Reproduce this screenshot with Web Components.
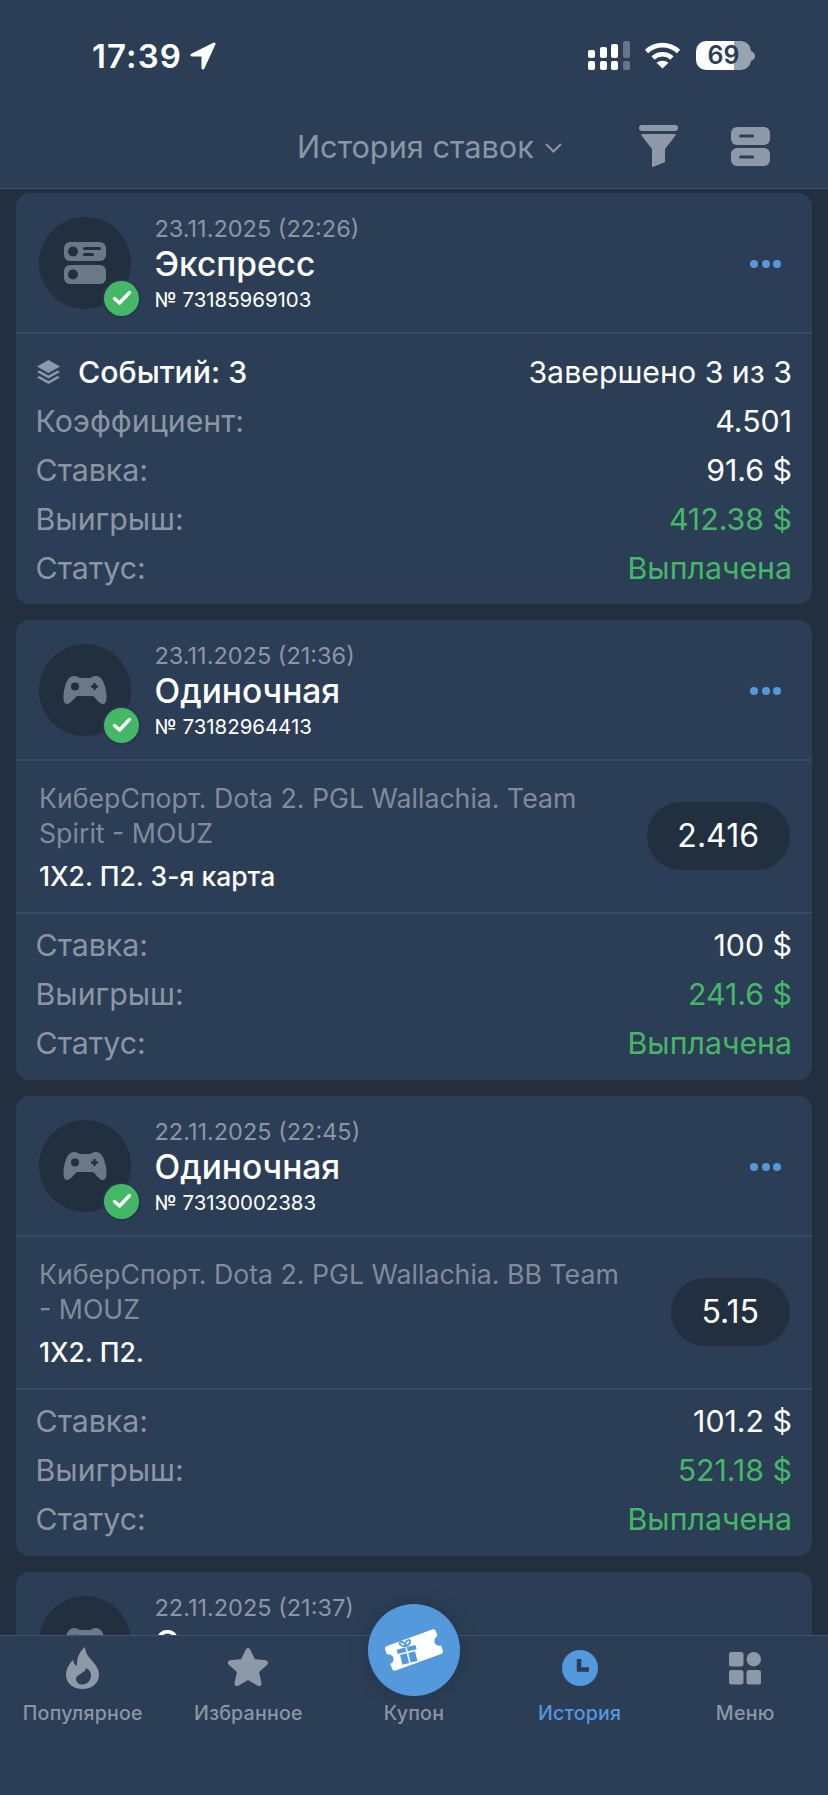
<!DOCTYPE html>
<html lang="ru">
<head>
<meta charset="utf-8">
<title>История ставок</title>
<style>
  html, body { margin: 0; height: 100%; }
  body {
    display: flex; flex-direction: column;
    width: 828px; height: 1795px; overflow: hidden;
    background: #232f3f; color: #fff;
    font-family: Inter, "Noto Sans", sans-serif;
  }
</style>
</head>
<body>
<status-bar></status-bar>
<history-header>История ставок</history-header>
<bet-list>
  <bet-card date="23.11.2025 (22:26)" title="Экспресс" number="№ 73185969103" icon="express">
    <bet-rows>
      <bet-row events value="Завершено 3 из 3" tone="white">Событий: 3</bet-row>
      <bet-row value="4.501">Коэффициент:</bet-row>
      <bet-row value="91.6 $">Ставка:</bet-row>
      <bet-row value="412.38 $" tone="green">Выигрыш:</bet-row>
      <bet-row value="Выплачена" tone="green">Статус:</bet-row>
    </bet-rows>
  </bet-card>
  <bet-card date="23.11.2025 (21:36)" title="Одиночная" number="№ 73182964413" icon="game">
    <bet-selection odds="2.416" pick="1X2. П2. 3-я карта">КиберСпорт. Dota 2. PGL Wallachia. Team Spirit - MOUZ</bet-selection>
    <bet-rows short>
      <bet-row value="100 $">Ставка:</bet-row>
      <bet-row value="241.6 $" tone="green">Выигрыш:</bet-row>
      <bet-row value="Выплачена" tone="green">Статус:</bet-row>
    </bet-rows>
  </bet-card>
  <bet-card date="22.11.2025 (22:45)" title="Одиночная" number="№ 73130002383" icon="game">
    <bet-selection odds="5.15" pick="1X2. П2.">КиберСпорт. Dota 2. PGL Wallachia. BB Team - MOUZ</bet-selection>
    <bet-rows short>
      <bet-row value="101.2 $">Ставка:</bet-row>
      <bet-row value="521.18 $" tone="green">Выигрыш:</bet-row>
      <bet-row value="Выплачена" tone="green">Статус:</bet-row>
    </bet-rows>
  </bet-card>
  <bet-card date="22.11.2025 (21:37)" title="Одиночная" icon="game"></bet-card>
</bet-list>
<tab-bar>
  <tab-item icon="fire">Популярное</tab-item>
  <tab-item icon="star">Избранное</tab-item>
  <tab-item icon="coupon">Купон</tab-item>
  <tab-item icon="clock" active>История</tab-item>
  <tab-item icon="menu">Меню</tab-item>
</tab-bar>

<script>
// Small helper: every element sets its shadow markup the same way.
function shadow(el, html) {
    el.attachShadow({mode: "open"}).innerHTML = html;
}

class StatusBar extends HTMLElement {
    constructor() {
        super();
        shadow(this, `
<style>
:host { display: flex; align-items: flex-start; justify-content: space-between; flex: none;
        height: 100px; padding: 41px 73px 0 92px; box-sizing: border-box; background: #2b3e55; }
.time { display: flex; align-items: center; gap: 8px; height: 30px;
        font: 600 33px/32px Inter, sans-serif; letter-spacing: 1.100px; color: #fff; }
.right { display: flex; align-items: flex-start; gap: 14px; }
.batt { display: flex; align-items: center; margin-left: 1px; }
.level { width: 55px; height: 29px; border-radius: 10px; text-align: center;
         background: linear-gradient(90deg, #fff 38px, #98a3b1 38px);
         font: 600 25px/29px Inter, sans-serif; color: #2b3e55; }
svg { display: block; }
</style>
<div class="time">17:39
  <svg width="26" height="28" viewBox="0 0 26 28"><path d="M24 2 L2 13 H13 V26 Z" fill="#fff" stroke="#fff" stroke-width="3" stroke-linejoin="round"/></svg>
</div>
<div class="right">
  <svg width="42" height="29" viewBox="0 0 42 29">
    <g fill="#fff"><rect x="0" y="9" width="7" height="8" rx="2"/><rect x="12" y="6" width="7" height="11" rx="2"/><rect x="23" y="3" width="7" height="14" rx="2"/>
    <rect x="0" y="20" width="7" height="9" rx="2"/><rect x="12" y="20" width="7" height="9" rx="2"/><rect x="23" y="20" width="7" height="9" rx="2"/></g>
    <g fill="#66768a"><rect x="35" y="0" width="7" height="17" rx="2"/><rect x="35" y="20" width="7" height="9" rx="2"/></g>
  </svg>
  <svg width="37" height="28" viewBox="0 0 37 28" fill="none" stroke="#fff" stroke-width="4.6">
    <path d="M2.5 10.5 C11.5 2 25.5 2 34.5 10.5"/><path d="M9 17 C14.5 12 22.5 12 28 17"/>
    <path d="M18.5 27.5 L12.5 21.8 C16 19 21 19 24.5 21.8 Z" fill="#fff" stroke="none"/>
  </svg>
  <div class="batt"><div class="level">69</div>
    <svg width="4" height="10" viewBox="0 0 4 10"><path d="M0 0 C3 1 4 3 4 5 C4 7 3 9 0 10 Z" fill="#98a3b1"/></svg>
  </div>
</div>`);
    }
}
customElements.define("status-bar", StatusBar);

class HistoryHeader extends HTMLElement {
    constructor() {
        super();
        shadow(this, `
<style>
:host { display: flex; align-items: center; height: 89px; padding: 4px 58px 0 297px; box-sizing: border-box;
        background: #2b3e55; border-bottom: 1px solid #3a4f68; color: #8b96a5; flex: none; }
.title { font: 400 30.700px/36px Inter, sans-serif; margin-top: 2px; white-space: nowrap; }
.chev { margin-left: 10px; margin-top: 3px; }
.funnel { margin-left: auto; }
.stack { margin-left: 53px; }
svg { display: block; flex: none; }
</style>
<span class="title"><slot></slot></span>
<svg class="chev" width="19" height="12" viewBox="0 0 19 12"><path d="M2 2 L9.5 9.5 L17 2" fill="none" stroke="#8b96a5" stroke-width="2" /></svg>
<svg class="funnel" width="39" height="42" viewBox="0 0 39 42" fill="#8e99a8">
  <rect width="39" height="6" rx="3"/>
  <path d="M3 9 H36 Q37.500 9 36.500 10.500 L26 24 V36 Q26 37 25 37.500 L14 42 Q13 42 13 41 V24 L2.500 10.500 Q1.500 9 3 9Z"/>
</svg>
<svg class="stack" width="39" height="39" viewBox="0 0 39 39" fill="#8e99a8">
  <rect width="39" height="18" rx="6"/><rect y="21" width="39" height="18" rx="6"/>
  <rect x="8" y="7.500" width="15" height="3" rx="1.500" fill="#2b3e55"/><rect x="8" y="28.500" width="15" height="3" rx="1.500" fill="#2b3e55"/>
</svg>`);
    }
}
customElements.define("history-header", HistoryHeader);

class BetList extends HTMLElement {
    constructor() {
        super();
        shadow(this, `
<style>
:host { display: flex; flex-direction: column; gap: 16px; flex: 1; min-height: 0; overflow: hidden;
        padding: 4px 16px 0; box-sizing: border-box; }
</style>
<slot></slot>`);
    }
}
customElements.define("bet-list", BetList);

const AVATAR_ICONS = {
    express: `<svg width="42" height="42" viewBox="0 0 42 42" fill="#6a7888">
        <rect width="42" height="19" rx="6"/><rect y="23" width="42" height="19" rx="6"/>
        <circle cx="9" cy="9.500" r="5" fill="#222f3f"/><circle cx="9" cy="32.500" r="5" fill="#222f3f"/>
        <rect x="19" y="5" width="18" height="3" rx="1.500" fill="#222f3f"/><rect x="19" y="11" width="11" height="3" rx="1.500" fill="#222f3f"/>
      </svg>`,
    game: `<svg width="44" height="30" viewBox="0 0 44 30" fill="#6a7888">
        <path d="M11 1 C14 1 16 3 18 3 H26 C28 3 30 1 33 1 C38 1 41 6 43 16 C44 22 44 29 40 29 C36 29 33 23 30 21 H14 C11 23 8 29 4 29 C0 29 0 22 1 16 C3 6 6 1 11 1Z"/>
        <circle cx="12" cy="11.500" r="4" fill="#222f3f"/>
        <path d="M31.500 8 V15 M28 11.500 H35" stroke="#222f3f" stroke-width="2.400"/>
      </svg>`
};

class BetCard extends HTMLElement {
    constructor() {
        super();
        const number = this.getAttribute("number");
        shadow(this, `
<style>
:host { display: block; flex: none; background: #2b3e55; border-radius: 14px; overflow: hidden; color: #fff; }
header { display: flex; height: 141px; box-sizing: border-box; padding: 23.500px 31px 0 23px;
         border-bottom: 2px solid #354a63; }
.avatar { position: relative; width: 92px; height: 92px; flex: none; border-radius: 50%; background: #222f3f;
          display: flex; align-items: center; justify-content: center; }
.badge { position: absolute; right: -8px; bottom: -7px; width: 35px; height: 35px; border-radius: 50%;
         background: #45b868; box-shadow: 0 0 0 2px #263750; display: flex; align-items: center; justify-content: center; }
.text { margin-left: 23.500px; flex: 1; display: flex; flex-direction: column; }
.date { font: 400 23.500px/24px Inter, sans-serif; color: #8b96a5; white-space: nowrap; }
.title { font: 500 33.500px/40px Inter, sans-serif; margin-top: 3.500px; }
.number { font: 400 20.400px/24px Inter, sans-serif; margin-top: 3.500px; }
.dots { display: flex; gap: 3.500px; margin-top: 43px; height: 8px; }
.dots i { width: 8px; height: 8px; border-radius: 50%; background: #5499dc; }
svg { display: block; }
</style>
<header>
  <div class="avatar">${AVATAR_ICONS[this.getAttribute("icon")]}
    <div class="badge"><svg width="20" height="16" viewBox="0 0 20 16"><path d="M2.500 8.500 L7.500 13 L17.500 2.500" fill="none" stroke="#fff" stroke-width="3.400" stroke-linecap="round" stroke-linejoin="round"/></svg></div>
  </div>
  <div class="text">
    <div class="date">${this.getAttribute("date")}</div>
    <div class="title">${this.getAttribute("title")}</div>
    ${number ? `<div class="number">${number}</div>` : ""}
  </div>
  <div class="dots"><i></i><i></i><i></i></div>
</header>
<slot></slot>`);
    }
}
customElements.define("bet-card", BetCard);

class BetRows extends HTMLElement {
    constructor() {
        super();
        shadow(this, `
<style>
:host { display: block; padding: 13px 20px 12px 19.500px; }
:host([short]) { padding-top: 6px; padding-bottom: 13px; }
</style>
<slot></slot>`);
    }
}
customElements.define("bet-rows", BetRows);

class BetRow extends HTMLElement {
    constructor() {
        super();
        const events = this.hasAttribute("events");
        shadow(this, `
<style>
:host { display: flex; align-items: center; height: 49px; font: 400 30.300px/36px Inter, sans-serif; color: #8b96a5; }
:host([events]) { color: #fff; font-weight: 500; }
.ev { margin: 0 18px 0 1.500px; display: block; }
.value { margin-left: auto; color: #fff; white-space: nowrap; }
:host([tone="green"]) .value { color: #45b868; }
:host([events]) .value { font-weight: 400; }
</style>
${events ? `<svg class="ev" width="23" height="24" viewBox="0 0 23 24" fill="#8e99a8">
  <path d="M11.500 0 L23 6.500 L11.500 13 L0 6.500Z"/>
  <path d="M2.500 10.500 L11.500 15.500 L20.500 10.500 L23 12 L11.500 18.500 L0 12Z"/>
  <path d="M2.500 16 L11.500 21 L20.500 16 L23 17.500 L11.500 24 L0 17.500Z"/></svg>` : ""}
<span><slot></slot></span>
<span class="value">${this.getAttribute("value")}</span>`);
    }
}
customElements.define("bet-row", BetRow);

class BetSelection extends HTMLElement {
    constructor() {
        super();
        shadow(this, `
<style>
:host { display: flex; align-items: center; height: 153px; box-sizing: border-box; padding: 0 22.500px 0 23px;
        border-bottom: 2px solid #354a63; }
.info { flex: 1; min-width: 0; }
.event { font: 400 26.700px/35px Inter, sans-serif; color: #808c9b; }
.pick { font: 500 26.500px/32px Inter, sans-serif; color: #fff; margin-top: 9px; }
.odds { flex: none; height: 68px; padding: 0 30.500px; margin: -2px 0 0 40px; border-radius: 34px; background: #222f3f;
        font: 400 32px/68px Inter, sans-serif; color: #fff; }
</style>
<div class="info">
  <div class="event"><slot></slot></div>
  <div class="pick">${this.getAttribute("pick")}</div>
</div>
<div class="odds">${this.getAttribute("odds")}</div>`);
    }
}
customElements.define("bet-selection", BetSelection);

class TabBar extends HTMLElement {
    constructor() {
        super();
        shadow(this, `
<style>
:host { display: grid; grid-template-columns: repeat(5, 1fr); height: 160px; flex: none; box-sizing: border-box;
        background: #2b3e55; border-top: 1px solid #3e5470; position: relative; }
</style>
<slot></slot>`);
    }
}
customElements.define("tab-bar", TabBar);

const TAB_ICONS = {
    fire: `<svg width="33" height="42" viewBox="0 0 33 42"><path fill="#8e99a8" d="M19 0 C19.500 8 24 11 28 16 C31 20 33 23 33 28 C33 36 26 42 16.500 42 C7 42 0 36 0 28 C0 22 3 17 7 13 C7.500 16 9 18 11 19 C10.500 12 13 5 19 0Z"/>
        <path fill="#2b3e55" d="M20 21 C20 26 10 27 10 32 C10 35.500 13 37.500 16.500 37.500 C21.500 37.500 25 33 25 28 C25 25 23 22.500 20 21Z"/></svg>`,
    star: `<svg width="42" height="42" viewBox="0 0 42 42"><path fill="#8e99a8" stroke="#8e99a8" stroke-width="5" stroke-linejoin="round" d="M21 3.500 L26.200 14.500 L38.500 15.800 L29.300 24.200 L32 36.500 L21 30 L10 36.500 L12.700 24.200 L3.500 15.800 L15.800 14.500Z"/></svg>`,
    clock: `<svg width="36" height="36" viewBox="0 0 36 36"><circle cx="18" cy="18" r="18" fill="#5499dc"/><path d="M17 9 V19.500 H27" fill="none" stroke="#2b3e55" stroke-width="4.500"/></svg>`,
    menu: `<svg width="32" height="33" viewBox="0 0 32 33" fill="#8e99a8"><rect width="14.500" height="14.500" rx="2.500"/><circle cx="24.800" cy="7.200" r="7.200"/><rect y="18" width="14.500" height="14.500" rx="2.500"/><rect x="17.500" y="18" width="14.500" height="14.500" rx="2.500"/></svg>`,
    coupon: `<svg width="92" height="92" viewBox="0 0 92 92">
        <g transform="rotate(-20 46 46)">
          <path fill="#fff" d="M22 33 H70 Q73 33 73 36 V41 A5 5 0 0 0 73 51 V56 Q73 59 70 59 H22 Q19 59 19 56 V51 A5 5 0 0 0 19 41 V36 Q19 33 22 33Z"/>
        </g>
        <g transform="rotate(-14 40 50)" fill="#5499dc">
          <rect x="30" y="43" width="9" height="4.500"/><rect x="40.500" y="43" width="9" height="4.500"/>
          <rect x="32" y="49" width="7" height="10"/><rect x="40.500" y="49" width="7" height="10"/>
          <path d="M39.700 42 C34 41 33 36.500 36 36.500 C38 36.500 39.700 39 39.700 42 C39.700 39 41.500 36.500 43.500 36.500 C46.500 36.500 45.500 41 39.700 42Z" fill="none" stroke="#5499dc" stroke-width="1.800"/>
        </g>
      </svg>`
};

class TabItem extends HTMLElement {
    constructor() {
        super();
        const name = this.getAttribute("icon");
        shadow(this, `
<style>
:host { display: flex; flex-direction: column; align-items: center; position: relative; color: #8b96a5; min-width: 0; }
:host([active]) { color: #5499dc; }
.icon { height: 42px; margin-top: 11px; display: flex; align-items: center; justify-content: center; }
.label { margin-top: 11.500px; font: 500 19.600px/24px Inter, sans-serif; letter-spacing: .2px; white-space: nowrap; }
/* the coupon button rides over the top edge of the bar */
.round { position: absolute; top: -32px; left: 50%; margin-left: -46px; width: 92px; height: 92px; border-radius: 50%;
         background: #5499dc; box-shadow: 0 0 22px rgba(0,0,0,.14); }
svg { display: block; }
</style>
${name === "coupon" ? `<div class="round">${TAB_ICONS[name]}</div><div class="icon"></div>` : `<div class="icon">${TAB_ICONS[name]}</div>`}
<div class="label"><slot></slot></div>`);
    }
}
customElements.define("tab-item", TabItem);
</script>
</body>
</html>
